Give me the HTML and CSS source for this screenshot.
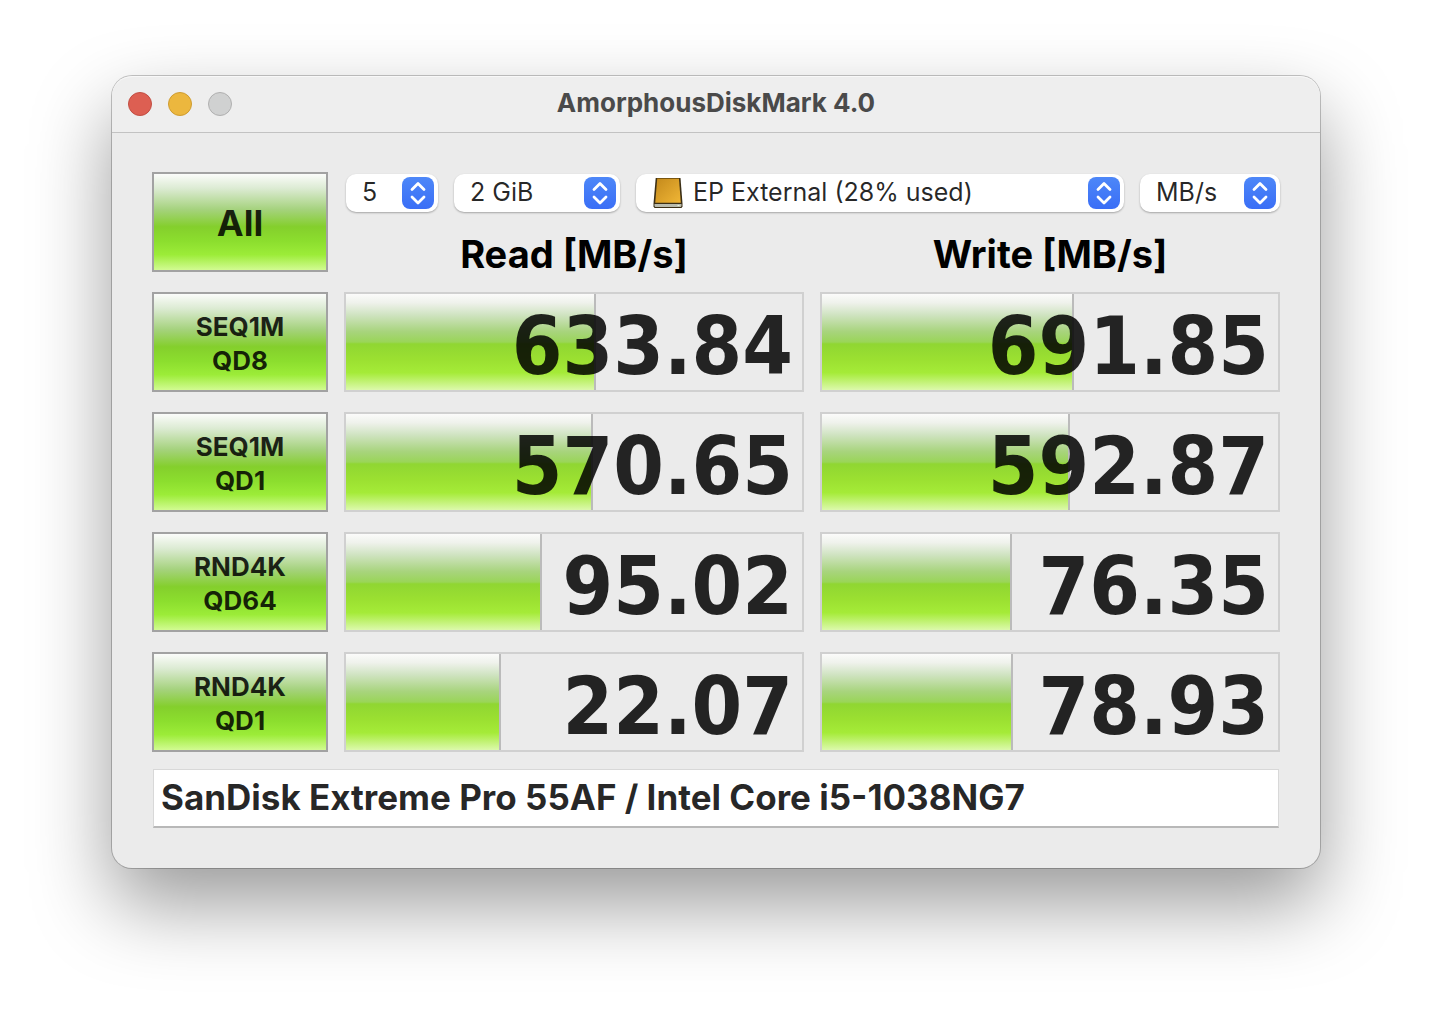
FILE: index.html
```html
<!DOCTYPE html>
<html lang="en">
<head>
<meta charset="utf-8">
<meta name="viewport" content="width=device-width, initial-scale=1">
<title>AmorphousDiskMark 4.0</title>
<link rel="stylesheet" href="styles.css">
</head>
<body>
<svg class="defs" aria-hidden="true">
  <defs>
    <linearGradient id="drive-face" x1="0" y1="0" x2="1" y2="1">
      <stop offset="0" stop-color="#c48a1c"/>
      <stop offset="1" stop-color="#f0b636"/>
    </linearGradient>
    <symbol id="chevrons" viewBox="0 0 32 32">
      <path d="M10 12.5 16 6.500 22 12.500M10 20 16 26 22 20" fill="none" stroke="#fff" stroke-width="2.800" stroke-linecap="round" stroke-linejoin="round"/>
    </symbol>
  </defs>
</svg>
<main class="window">
  <header class="titlebar">
    <div class="lights">
      <button class="light light-close" type="button" aria-label="Close"></button>
      <button class="light light-minimize" type="button" aria-label="Minimize"></button>
      <button class="light light-zoom" type="button" aria-label="Zoom" disabled></button>
    </div>
    <h1 class="title">AmorphousDiskMark 4.0</h1>
  </header>
  <div class="content">
    <table class="results">
      <colgroup><col class="col-test"><col><col></colgroup>
      <thead>
        <tr class="row-options">
          <td rowspan="2"><button class="test test-all" type="button">All</button></td>
          <td colspan="2">
            <div class="options">
              <div class="popup popup-count">
                <select aria-label="Test count"><option>5</option></select>
                <svg class="stepper" aria-hidden="true"><use href="#chevrons"/></svg>
              </div>
              <div class="popup popup-size">
                <select aria-label="Test size"><option>2 GiB</option></select>
                <svg class="stepper" aria-hidden="true"><use href="#chevrons"/></svg>
              </div>
              <div class="popup popup-volume">
                <svg class="drive" viewBox="0 0 32 32" aria-hidden="true">
                  <path d="M3.700 1H28.500L30.500 26.500V29.500L29.500 31H2.500L1.500 29.500V26.500Z" fill="#3b2f16"/>
                  <path d="M5.200 2H27L28.800 25.800H3.200Z" fill="url(#drive-face)"/>
                  <path d="M5 1.500H27.200" stroke="#7a560f" stroke-width="1"/>
                  <path d="M2.500 27H29.500V29L28.800 30H3.200L2.500 29Z" fill="#b9bbae"/>
                  <path d="M25.500 28.500H27.500" stroke="#e9f3d8" stroke-width="1"/>
                </svg>
                <select aria-label="Volume"><option>EP External (28% used)</option></select>
                <svg class="stepper" aria-hidden="true"><use href="#chevrons"/></svg>
              </div>
              <div class="popup popup-unit">
                <select aria-label="Unit"><option>MB/s</option></select>
                <svg class="stepper" aria-hidden="true"><use href="#chevrons"/></svg>
              </div>
            </div>
          </td>
        </tr>
        <tr class="row-headings">
          <th scope="col">Read [MB/s]</th>
          <th scope="col">Write [MB/s]</th>
        </tr>
      </thead>
      <tbody>
        <tr>
          <th scope="row"><button class="test" type="button">SEQ1M<br>QD8</button></th>
          <td><div class="gauge"><div class="fill" style="width:54.8%"></div><span class="value">633.84</span></div></td>
          <td><div class="gauge"><div class="fill" style="width:55.3%"></div><span class="value">691.85</span></div></td>
        </tr>
        <tr>
          <th scope="row"><button class="test" type="button">SEQ1M<br>QD1</button></th>
          <td><div class="gauge"><div class="fill" style="width:54.2%"></div><span class="value">570.65</span></div></td>
          <td><div class="gauge"><div class="fill" style="width:54.4%"></div><span class="value">592.87</span></div></td>
        </tr>
        <tr>
          <th scope="row"><button class="test" type="button">RND4K<br>QD64</button></th>
          <td><div class="gauge"><div class="fill" style="width:43%"></div><span class="value">95.02</span></div></td>
          <td><div class="gauge"><div class="fill" style="width:41.7%"></div><span class="value">76.35</span></div></td>
        </tr>
        <tr>
          <th scope="row"><button class="test" type="button">RND4K<br>QD1</button></th>
          <td><div class="gauge"><div class="fill" style="width:34%"></div><span class="value">22.07</span></div></td>
          <td><div class="gauge"><div class="fill" style="width:41.9%"></div><span class="value">78.93</span></div></td>
        </tr>
      </tbody>
    </table>
    <input class="comment" type="text" aria-label="Comment" value="SanDisk Extreme Pro 55AF / Intel Core i5-1038NG7">
  </div>
</main>
</body>
</html>
```
FILE: styles.css
```css
* { box-sizing: border-box; }

body {
  margin: 0;
  min-height: 100vh;
  padding: 76px 112px;
  background: #fff;
  font-family: Inter, "Liberation Sans", sans-serif;
  color: rgba(0, 0, 0, 0.85);
}

.defs { position: absolute; width: 0; height: 0; }

.window {
  min-width: 960px;
  border-radius: 20px;
  background: #ebebeb;
  box-shadow: 0 0 0 1px rgba(0, 0, 0, 0.22), 0 36px 80px rgba(0, 0, 0, 0.4);
}

.titlebar {
  display: grid;
  grid-template-columns: 1fr auto 1fr;
  align-items: center;
  height: 57px;
  padding: 0 16px;
  border-bottom: 1px solid #c2c2c2;
  border-radius: 20px 20px 0 0;
  background: #eee;
  box-shadow: inset 0 1px #f8f8f8;
}

.lights { display: flex; gap: 16px; }

.light {
  width: 24px;
  height: 24px;
  padding: 0;
  border: 1px solid;
  border-radius: 50%;
}
.light-close { background: #dd5f52; border-color: #c24e43; }
.light-minimize { background: #ecb73e; border-color: #cf9c30; }
.light-zoom { background: #d0d1d1; border-color: #b0b0b0; }

.title {
  margin: 0;
  padding-bottom: 2px;
  font-size: 26px;
  line-height: 32px;
  font-weight: 700;
  color: #4a4a4a;
}

.content { padding: 19px 24px 40px; }

.results {
  width: 100%;
  table-layout: fixed;
  border-spacing: 16px 20px;
}
.col-test { width: 176px; }
.results td, .results th { padding: 0; }
.row-options { height: 40px; }
.results .row-headings th {
  height: 40px;
  padding-top: 4px;
  font-size: 38px;
  line-height: 36px;
  font-weight: 700;
  color: #000;
}

.test {
  display: block;
  width: 100%;
  height: 100px;
  padding: 4px 0 0;
  border: 2px solid #a2a2a2;
  background: linear-gradient(#fbfcfa 0%, #dcebd3 15%, #a5d27d 37%, #84cf2c 55%, #8cde2e 70%, #9cec38 84%, #d2fb92 100%);
  font: 700 26px/34px Inter, "Liberation Sans", sans-serif;
  color: rgba(0, 0, 0, 0.85);
}
.test-all { padding-top: 2px; font-size: 36px; }

.options { display: flex; gap: 16px; padding: 2px 0 0 2px; }

.popup { position: relative; height: 38px; }
.popup-count { width: 92px; }
.popup-size { width: 166px; }
.popup-volume { flex: 1; }
.popup-unit { width: 140px; }

.popup select {
  display: block;
  width: 100%;
  height: 38px;
  padding: 0 44px 2px 16px;
  border: 0;
  border-radius: 10px;
  appearance: none;
  background: #fff;
  box-shadow: 0 1px 2px rgba(0, 0, 0, 0.3);
  font: 400 25px/36px Inter, "Liberation Sans", sans-serif;
  color: rgba(0, 0, 0, 0.85);
}
.popup-volume select { padding-left: 57px; }

.stepper {
  position: absolute;
  top: 3px;
  right: 4px;
  width: 32px;
  height: 32px;
  border-radius: 8px;
  background: linear-gradient(#4d87f8, #3a6ef6);
  pointer-events: none;
}

.drive {
  position: absolute;
  top: 3px;
  left: 16px;
  width: 32px;
  height: 32px;
  pointer-events: none;
}

.gauge {
  display: grid;
  height: 100px;
  border: 2px solid #d0d0d0;
}
.fill, .value { grid-area: 1 / 1; }
.fill {
  border-right: 2px solid #bbb;
  background: linear-gradient(#fbfbfa 0%, #eff2ec 9%, #cfe3c0 22%, #a8d47d 39%, #9ad558 50%, #90d632 52%, #9be031 68%, #a5eb38 82%, #dcf9ac 100%);
}
.value {
  padding: 8px 9px 0 0;
  text-align: right;
  font: 700 81px/88px "DejaVu Sans Condensed", "DejaVu Sans", sans-serif;
  color: rgba(0, 0, 0, 0.85);
}

.comment {
  display: block;
  width: calc(100% - 34px);
  height: 59px;
  margin: -3px 17px 0;
  padding: 0 7px 2px;
  border: 1px solid #d8d8d8;
  border-bottom: 2px solid #b8b8b8;
  border-radius: 0;
  background: #fff;
  font: 700 35px/52px Inter, "Liberation Sans", sans-serif;
  color: rgba(0, 0, 0, 0.85);
}
```
